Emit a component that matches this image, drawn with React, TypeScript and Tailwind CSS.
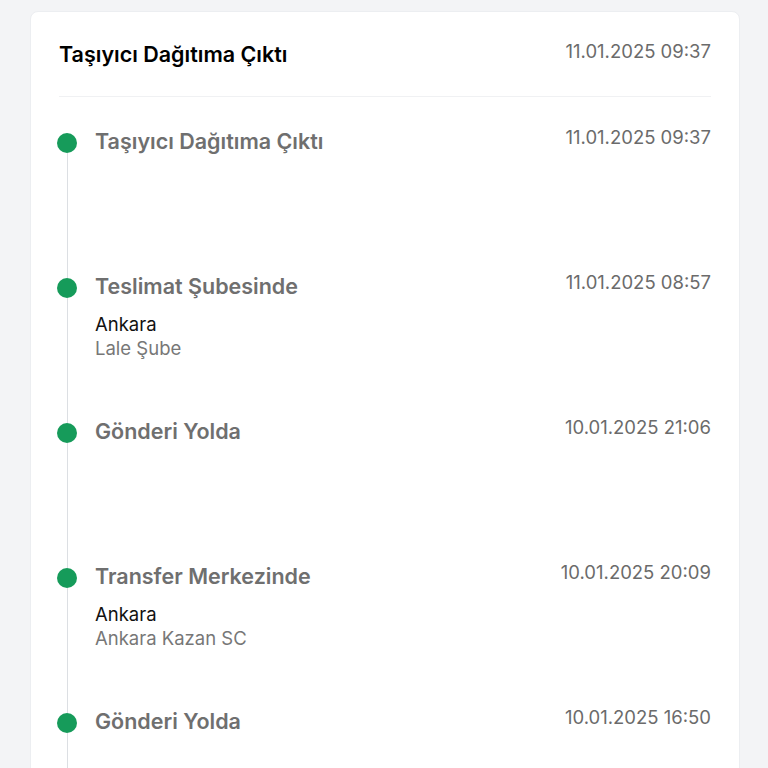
const events = [
  { title: "Taşıyıcı Dağıtıma Çıktı", date: "11.01.2025 09:37" },
  { title: "Teslimat Şubesinde", date: "11.01.2025 08:57", city: "Ankara", branch: "Lale Şube" },
  { title: "Gönderi Yolda", date: "10.01.2025 21:06" },
  { title: "Transfer Merkezinde", date: "10.01.2025 20:09", city: "Ankara", branch: "Ankara Kazan SC" },
  { title: "Gönderi Yolda", date: "10.01.2025 16:50" },
];

function TimelineItem({
  title,
  date,
  city,
  branch,
  first,
}: {
  title: string;
  date: string;
  city?: string;
  branch?: string;
  first: boolean;
}) {
  return (
    <div className="flex h-[145px]">
      <div className="flex w-4 shrink-0 flex-col items-center">
        <div className={first ? "h-[6px] w-px" : "h-[6px] w-px bg-[#dcdfe3]"} />
        <div className="h-5 w-5 shrink-0 rounded-full bg-[#169b5a]" />
        <div className="w-px flex-1 bg-[#dcdfe3]" />
      </div>
      <div className="ml-5 flex flex-1 items-start justify-between">
        <div>
          <div className="text-[21.5px] font-semibold leading-7 text-[#6f6f6f]">{title}</div>
          {city && (
            <div className="mt-[12px] text-[18.5px] leading-6">
              <div className="text-[#111]">{city}</div>
              <div className="text-[#777]">{branch}</div>
            </div>
          )}
        </div>
        <div className="text-[18.5px] leading-5 text-[#6b6b6b]">{date}</div>
      </div>
    </div>
  );
}

export default function App() {
  return (
    <div className="min-h-screen bg-[#f3f4f6] pl-[30px] pt-[11px] font-['Inter',sans-serif]">
      <div className="w-[710px] rounded-lg border border-[#eceef1] bg-white px-7 pt-7">
        <div className="flex items-start justify-between border-b border-[#f0f1f3] pb-7">
          <h1 className="text-[21.5px] font-semibold leading-7 text-black">Taşıyıcı Dağıtıma Çıktı</h1>
          <span className="text-[18.5px] leading-[22px] text-[#6b6b6b]">11.01.2025 09:37</span>
        </div>
        <div className="pt-[30px]">
          {events.map((e, i) => (
            <TimelineItem key={i} {...e} first={i === 0} />
          ))}
        </div>
      </div>
    </div>
  );
}
